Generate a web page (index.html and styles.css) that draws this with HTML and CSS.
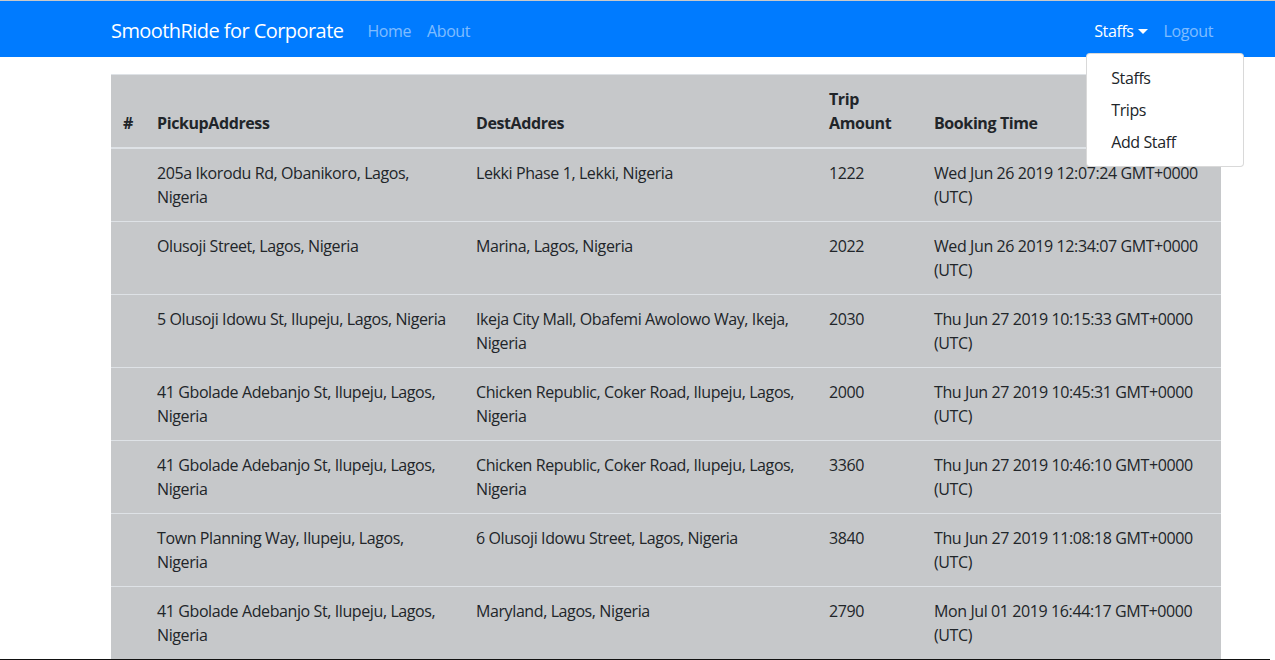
FILE: index.html
```html
<!DOCTYPE html>
<html lang="en">
<head>
<meta charset="utf-8">
<title>SmoothRide for Corporate</title>
<link rel="stylesheet" href="styles.css">
</head>
<body>
<nav class="navbar">
  <div class="nav-inner">
    <div class="nav-left">
      <a class="brand" href="#">SmoothRide for Corporate</a>
      <ul class="nav-list">
        <li><a class="nav-link" href="#">Home</a></li>
        <li><a class="nav-link" href="#">About</a></li>
      </ul>
    </div>
    <ul class="nav-list">
      <li class="nav-item-dd">
        <a class="nav-link active" href="#">Staffs<span class="caret"></span></a>
        <div class="dropdown-menu">
          <a class="dropdown-item" href="#">Staffs</a>
          <a class="dropdown-item" href="#">Trips</a>
          <a class="dropdown-item" href="#">Add Staff</a>
        </div>
      </li>
      <li><a class="nav-link" href="#">Logout</a></li>
    </ul>
  </div>
</nav>
<main class="container">
  <table class="trips">
    <colgroup>
      <col class="c-num"><col class="c-pick"><col class="c-dest"><col class="c-amt"><col class="c-time">
    </colgroup>
    <thead>
      <tr><th>#</th><th>PickupAddress</th><th>DestAddres</th><th>Trip<br>Amount</th><th>Booking Time</th></tr>
    </thead>
    <tbody>
      <tr><td></td><td>205a Ikorodu Rd, Obanikoro, Lagos,<br>Nigeria</td><td>Lekki Phase 1, Lekki, Nigeria</td><td>1222</td><td>Wed Jun 26 2019 12:07:24 GMT+0000<br>(UTC)</td></tr>
      <tr><td></td><td>Olusoji Street, Lagos, Nigeria</td><td>Marina, Lagos, Nigeria</td><td>2022</td><td>Wed Jun 26 2019 12:34:07 GMT+0000<br>(UTC)</td></tr>
      <tr><td></td><td>5 Olusoji Idowu St, Ilupeju, Lagos, Nigeria</td><td>Ikeja City Mall, Obafemi Awolowo Way, Ikeja,<br>Nigeria</td><td>2030</td><td>Thu Jun 27 2019 10:15:33 GMT+0000<br>(UTC)</td></tr>
      <tr><td></td><td>41 Gbolade Adebanjo St, Ilupeju, Lagos,<br>Nigeria</td><td>Chicken Republic, Coker Road, Ilupeju, Lagos,<br>Nigeria</td><td>2000</td><td>Thu Jun 27 2019 10:45:31 GMT+0000<br>(UTC)</td></tr>
      <tr><td></td><td>41 Gbolade Adebanjo St, Ilupeju, Lagos,<br>Nigeria</td><td>Chicken Republic, Coker Road, Ilupeju, Lagos,<br>Nigeria</td><td>3360</td><td>Thu Jun 27 2019 10:46:10 GMT+0000<br>(UTC)</td></tr>
      <tr><td></td><td>Town Planning Way, Ilupeju, Lagos,<br>Nigeria</td><td>6 Olusoji Idowu Street, Lagos, Nigeria</td><td>3840</td><td>Thu Jun 27 2019 11:08:18 GMT+0000<br>(UTC)</td></tr>
      <tr><td></td><td>41 Gbolade Adebanjo St, Ilupeju, Lagos,<br>Nigeria</td><td>Maryland, Lagos, Nigeria</td><td>2790</td><td>Mon Jul 01 2019 16:44:17 GMT+0000<br>(UTC)</td></tr>
    </tbody>
  </table>
</main>
<div class="screen-edge"></div>
</body>
</html>
```
FILE: styles.css
```css
* { box-sizing: border-box; }
html, body { margin: 0; padding: 0; }
body {
  font-family: "Segoe UI", "Open Sans", "Noto Sans", sans-serif;
  font-size: 16px;
  line-height: 1.5;
  letter-spacing: -0.025em;
  color: #212529;
  background: #fff;
  border-top: 1px solid #c9c9c9;
  overflow: hidden;
}
a { text-decoration: none; }
ul { list-style: none; margin: 0; padding: 0; }

.navbar {
  background: #007bff;
  padding: 10px 0 6px;
}
.nav-inner {
  width: 1110px;
  margin-left: 111px;
  display: flex;
  justify-content: space-between;
  align-items: center;
}
.nav-left { display: flex; align-items: center; }
.brand {
  color: #fff;
  font-size: 20px;
  line-height: 30px;
  letter-spacing: -0.028em;
  padding: 5px 0;
  margin-right: 16px;
  white-space: nowrap;
}
.nav-list { display: flex; }
.nav-link {
  display: block;
  padding: 8px;
  color: rgba(255,255,255,.5);
  white-space: nowrap;
}
.nav-link.active { color: #fff; }
.caret {
  display: inline-block;
  margin-left: 4px;
  vertical-align: 3px;
  border-top: 5px solid;
  border-left: 5px solid transparent;
  border-right: 5px solid transparent;
}
.nav-item-dd { position: relative; }
.dropdown-menu {
  position: absolute;
  top: 100%;
  left: 0;
  margin-top: 2px;
  min-width: 158px;
  padding: 8px 0;
  background: #fff;
  border: 1px solid rgba(0,0,0,.15);
  border-radius: 4px;
  z-index: 10;
}
.dropdown-item {
  display: block;
  padding: 4px 24px;
  color: #212529;
  white-space: nowrap;
}

.container {
  width: 1110px;
  margin: 17px 0 0 111px;
}
.trips {
  width: 100%;
  border-collapse: collapse;
  table-layout: fixed;
  background: #c6c8ca;
}
.c-num { width: 34px; }
.c-pick { width: 319px; }
.c-dest { width: 353px; }
.c-amt { width: 105px; }
.c-time { width: 299px; }
.trips th, .trips td {
  padding: 12px;
  vertical-align: top;
  border-top: 1px solid #dee2e6;
  text-align: left;
  white-space: nowrap;
}
.trips thead th {
  vertical-align: bottom;
  border-bottom: 2px solid #dee2e6;
  font-weight: 700;
}
.screen-edge {
  position: fixed;
  left: 0;
  right: 5px;
  bottom: 0;
  height: 1px;
  background: #111;
}
```
